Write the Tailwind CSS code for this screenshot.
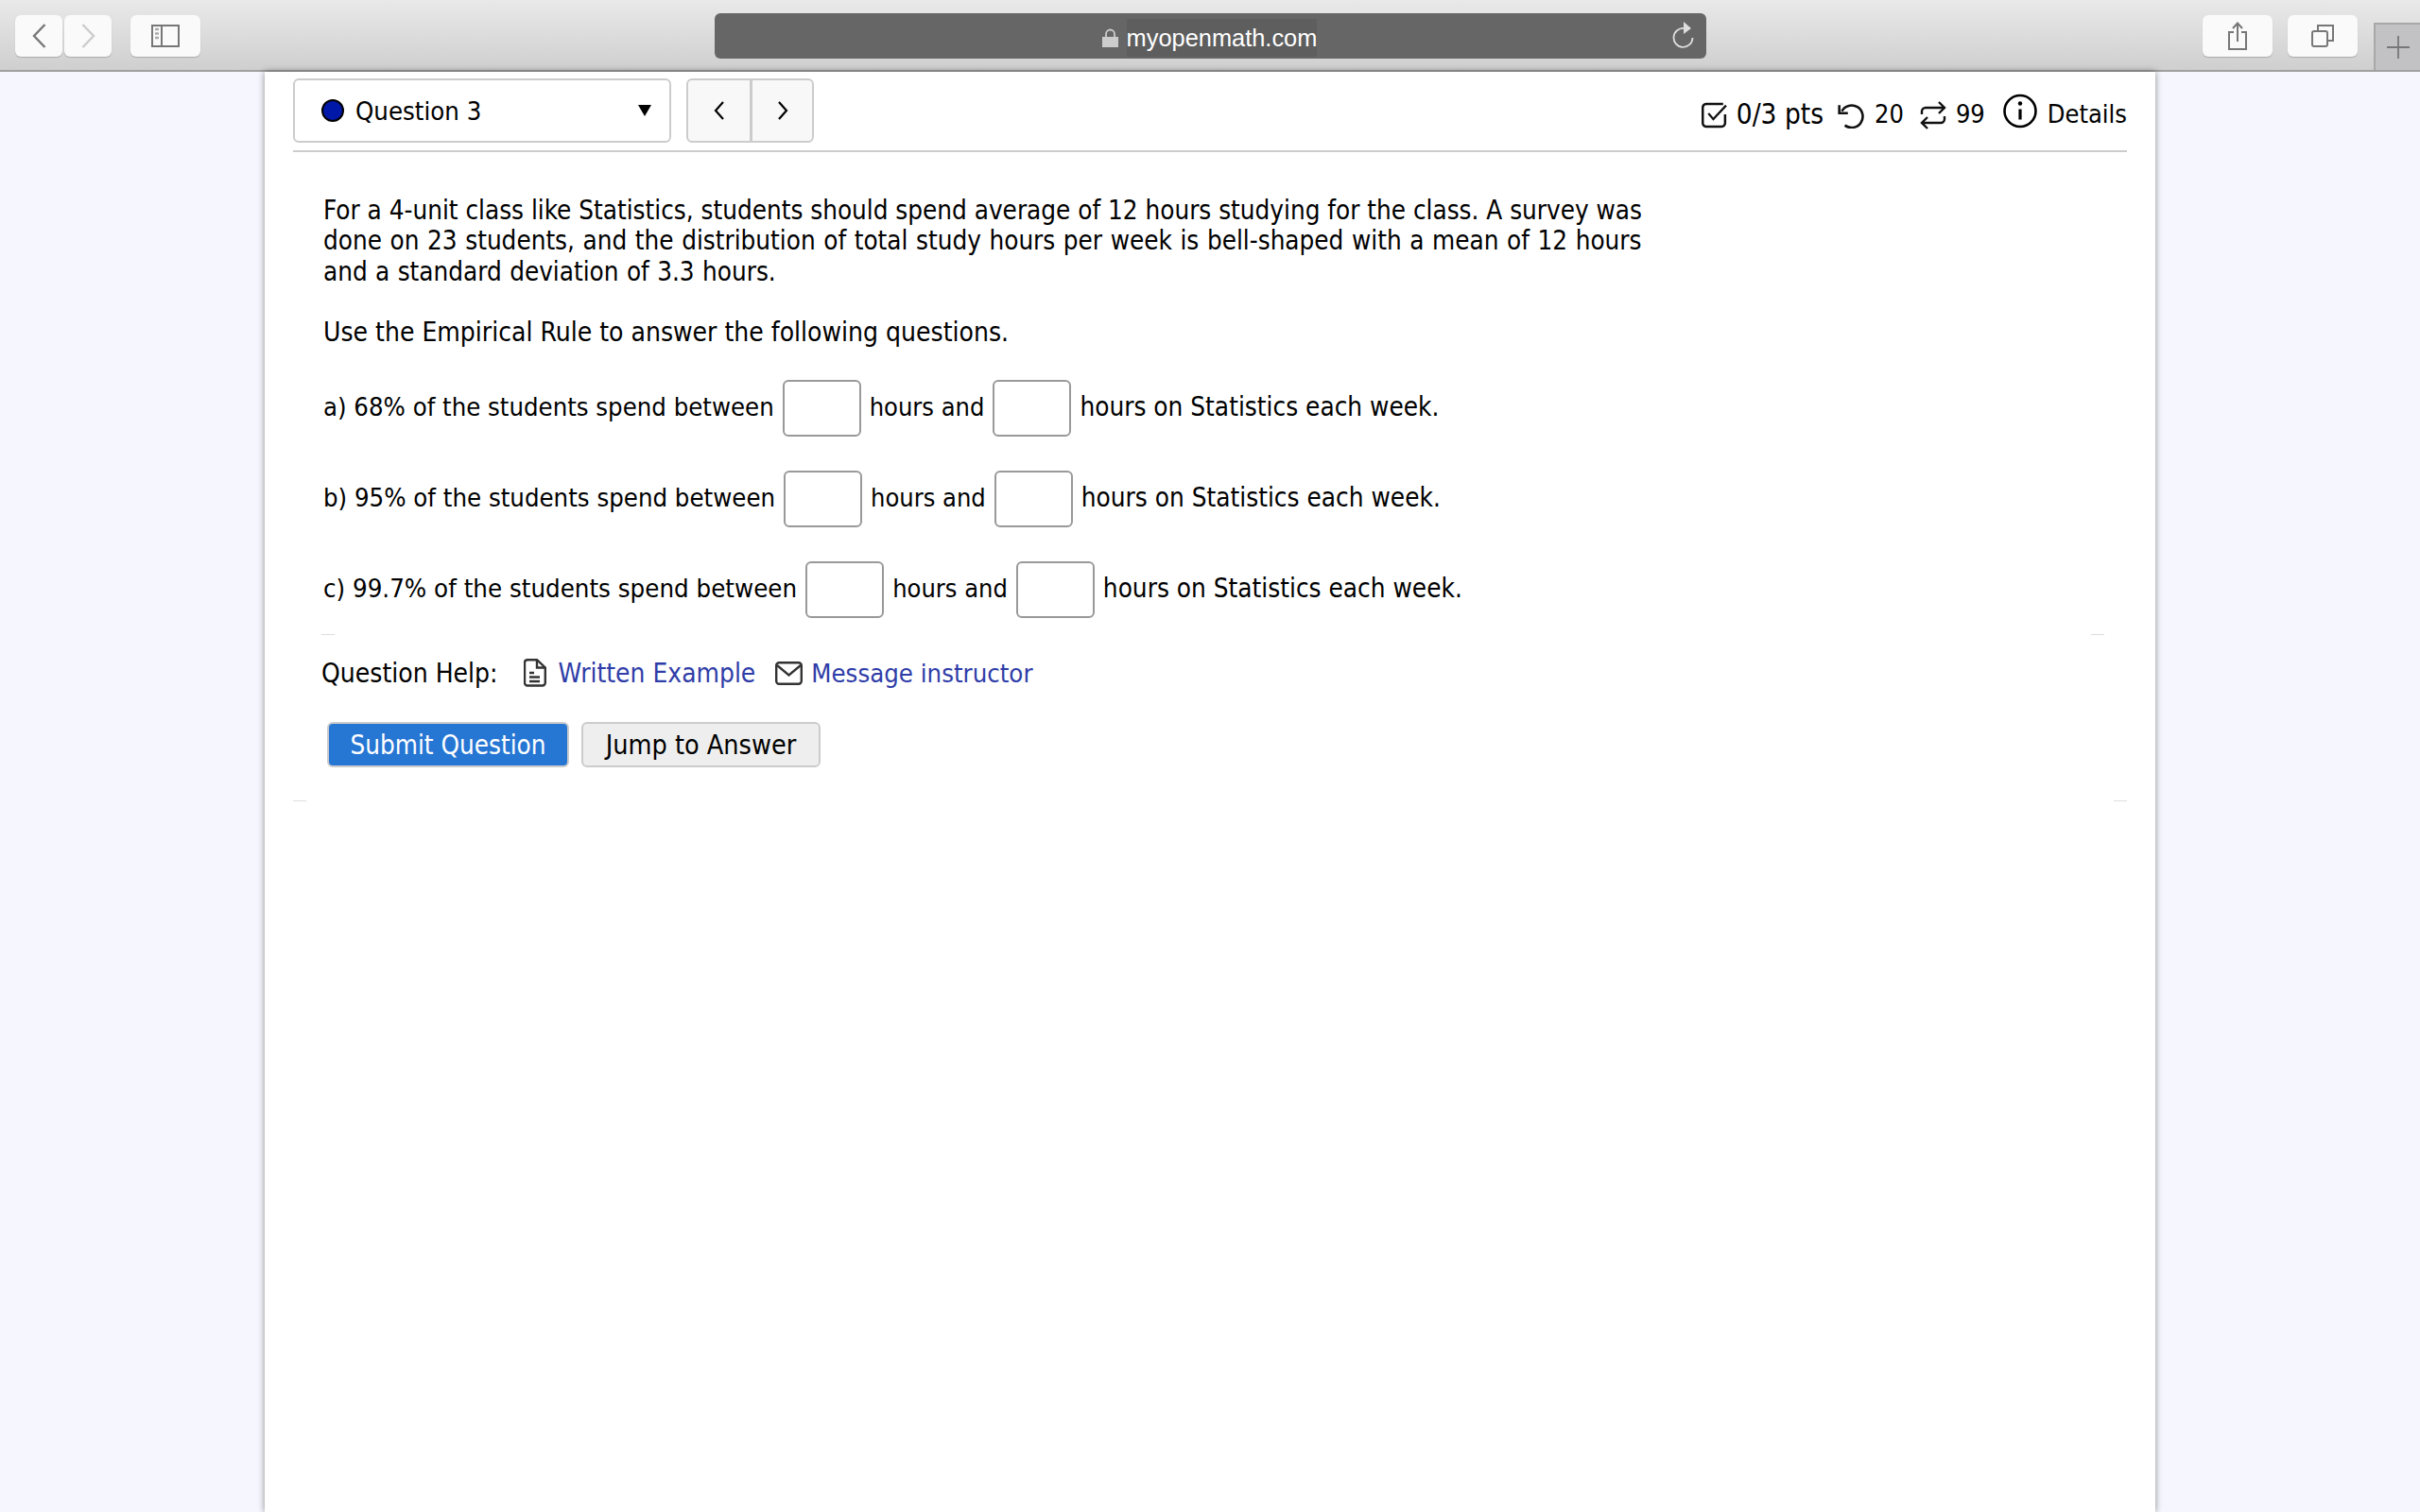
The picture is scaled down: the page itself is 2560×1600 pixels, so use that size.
<!DOCTYPE html>
<html lang="en">
<head>
  <meta charset="UTF-8">
  <title>myopenmath.com</title>
  <script src="https://cdn.jsdelivr.net/npm/@tailwindcss/browser@4"></script>
</head>
<body class="bg-[#f6f7fe] text-black h-[1600px] overflow-hidden font-['DejaVu_Sans'] [font-stretch:condensed] text-[27.6px]">

  <!-- Browser toolbar -->
  <header class="h-[76px] bg-gradient-to-b from-[#e9e9e9] to-[#cfcfcf] border-b-2 border-[#a0a0a0] flex items-start pl-[16px]">
    <div class="w-[50px] h-[44px] mt-[16px] bg-[#fafafa] rounded-[6px] shadow-[0_1px_1px_#aaa] flex items-center justify-center">
      <svg width="15" height="26" viewBox="0 0 15 26" fill="none" stroke="#777" stroke-width="2.4"><path d="M13.5 1 2 13l11.500 12"/></svg>
    </div>
    <div class="w-[50px] h-[44px] mt-[16px] ml-[2px] bg-[#fafafa] rounded-[6px] shadow-[0_1px_1px_#aaa] flex items-center justify-center">
      <svg width="15" height="26" viewBox="0 0 15 26" fill="none" stroke="#ccc" stroke-width="2.4"><path d="M1.500 1 13 13 1.500 25"/></svg>
    </div>
    <div class="w-[74px] h-[44px] mt-[16px] ml-[20px] bg-[#fafafa] rounded-[6px] shadow-[0_1px_1px_#aaa] flex items-center justify-center">
      <svg width="30" height="24" viewBox="0 0 30 24" fill="none" stroke="#777" stroke-width="2"><rect x="1" y="1" width="28" height="22"/><path d="M11 1v22"/><path d="M4 5h4M4 9.500h4M4 14h4" stroke="#aaa" stroke-width="2.400"/></svg>
    </div>

    <div class="relative w-[1049px] h-[48px] mt-[14px] ml-[544px] rounded-[6px] bg-[#666666] flex items-center justify-center">
      <svg width="17" height="20" viewBox="0 0 17 20" class="mt-[4px] mr-[9px] -ml-[2px]"><path d="M4 9V6a4.500 4.500 0 0 1 9 0v3" fill="none" stroke="#ccc" stroke-width="1.800"/><rect x="0" y="9" width="17" height="11" fill="#ccc"/></svg>
      <span class="mt-[4px] text-white text-[25.400px] font-['Liberation_Sans'] [font-stretch:normal] bg-[#5e5e5e] leading-[40px]">myopenmath.com</span>
      <svg width="24" height="28" viewBox="0 0 24 28" fill="none" class="absolute right-[13px] top-[9px]"><path d="M14 7A10 10 0 1 0 22.500 17" stroke="#ddd" stroke-width="1.800"/><path d="M13 0l8 7-8 6z" fill="#ddd"/></svg>
    </div>

    <div class="w-[74px] h-[44px] mt-[16px] ml-[525px] bg-[#fafafa] rounded-[6px] shadow-[0_1px_1px_#aaa] flex items-center justify-center">
      <svg width="20" height="30" viewBox="0 0 20 30" fill="none" stroke="#777" stroke-width="2"><path d="M6 11H1v18h18V11h-5"/><path d="M10 21V1.500M5 7l5-5.500L15 7"/></svg>
    </div>
    <div class="w-[74px] h-[44px] mt-[16px] ml-[16px] bg-[#fafafa] rounded-[6px] shadow-[0_1px_1px_#aaa] flex items-center justify-center">
      <svg width="24" height="24" viewBox="0 0 24 24" fill="none" stroke="#777" stroke-width="2"><rect x="1" y="7" width="16" height="16" rx="2"/><path d="M7 6V1h16v16h-5"/></svg>
    </div>
    <div class="w-[49px] h-[50px] mt-[24px] ml-[17px] bg-[#c2c2c4] border-t-2 border-l-2 border-[#a8a8a8] flex items-center justify-center">
      <svg width="24" height="24" viewBox="0 0 24 24" stroke="#777" stroke-width="1.800"><path d="M12 0v24M0 12h24"/></svg>
    </div>
  </header>

  <!-- Page -->
  <main class="w-[2000px] ml-[280px] h-[1524px] bg-white shadow-[0_0_7px_rgba(0,0,0,0.45)] px-[30px]">

    <div class="h-[85px] border-b-2 border-[#cccccc] flex items-start justify-between">
      <div class="flex items-center mt-[7px]">
        <div class="w-[400px] h-[68px] border-2 border-[#cccccc] rounded-[6px] flex items-center pl-[28px] pr-[19px]">
          <span class="w-[24px] h-[24px] rounded-full bg-[#0018a8] border-2 border-black"></span>
          <span class="ml-[12px] pt-[2px] flex-1 text-[27.300px]">Question 3</span>
          <span class="w-0 h-0 border-l-[7px] border-r-[7px] border-t-[12px] border-l-transparent border-r-transparent border-t-black"></span>
        </div>
        <div class="ml-[16px] h-[68px] flex border-2 border-[#cccccc] rounded-[6px] bg-[#f8f8f8]">
          <div class="w-[68px] border-r-[3px] border-[#cccccc] flex items-center justify-center">
            <svg width="12" height="20" viewBox="0 0 12 20" fill="none" stroke="#000" stroke-width="2.200"><path d="M10 1 2 10l8 9"/></svg>
          </div>
          <div class="w-[63px] flex items-center justify-center">
            <svg width="12" height="20" viewBox="0 0 12 20" fill="none" stroke="#000" stroke-width="2.200"><path d="m2 1 8 9-8 9"/></svg>
          </div>
        </div>
      </div>
      <div class="flex items-center mt-[26px] h-[36px] text-[27px]">
        <svg width="28" height="28" viewBox="0 0 27 26" fill="none" stroke="#111" stroke-width="2.400" class="mt-[4px]"><path d="M24 12v9a3.500 3.500 0 0 1-3.500 3.500h-16A3.500 3.500 0 0 1 1.200 21V5a3.500 3.500 0 0 1 3.300-3.500H22"/><path d="m7 11 5 6L25 3" stroke-width="2.200"/></svg>
        <span class="ml-[9px] mt-[2px] text-[29.500px]">0/3 pts</span>
        <svg width="30" height="26" viewBox="0 0 28 24" fill="none" stroke="#111" stroke-width="2.400" class="ml-[14px] mt-[5px]"><path d="M5 7a11 11 0 1 1 3 14"/><path d="M2.500 1v8h8.500"/></svg>
        <span class="ml-[10px] mt-[2px]">20</span>
        <svg width="28" height="30" viewBox="0 0 28 30" fill="none" stroke="#111" stroke-width="2.400" class="ml-[17px] mt-[4px]"><path d="M2 14v-3a4 4 0 0 1 4-4h20M20 1l6 6-6 6"/><path d="M26 16v3a4 4 0 0 1-4 4H2M8 17l-6 6 6 6"/></svg>
        <span class="ml-[10px] mt-[2px]">99</span>
        <svg width="36" height="37" viewBox="0 0 36 37" fill="none" stroke="#000" stroke-width="2.600" class="ml-[19px] -mt-[5px]"><circle cx="18" cy="18.500" r="16.500"/><path d="M18 16.500v11" stroke-width="3.200"/><circle cx="18" cy="10.500" r="2.200" fill="#000" stroke="none"/></svg>
        <span class="ml-[11px] mt-[2px]">Details</span>
      </div>
    </div>

    <!-- Question text -->
    <div class="pl-[32px] pt-[46px] leading-[32.300px]">
      <p class="whitespace-nowrap">For a 4-unit class like Statistics, students should spend average of 12 hours studying for the class. A survey was<br><span class="[word-spacing:0.7px]">done on 23 students, and the distribution of total study hours per week is bell-shaped with a mean of 12 hours</span><br><span class="[word-spacing:0.5px]">and a standard deviation of 3.3 hours.</span></p>
      <p class="mt-[32px] text-[28px]">Use the Empirical Rule to answer the following questions.</p>

      <div class="mt-[34px] flex items-center h-[60px]">
        <span class="mb-[3px] text-[27.250px]">a) 68% of the students spend between</span>
        <input class="w-[83px] h-[60px] mx-[9px] border-2 border-[#999999] rounded-[6px]" type="text">
        <span class="mb-[3px] text-[27px]">hours and</span>
        <input class="w-[83px] h-[60px] mx-[9px] border-2 border-[#999999] rounded-[6px]" type="text">
        <span class="mb-[3px] text-[27.700px]">hours on Statistics each week.</span>
      </div>
      <div class="mt-[36px] flex items-center h-[60px]">
        <span class="mb-[3px] text-[27.300px]">b) 95% of the students spend between</span>
        <input class="w-[83px] h-[60px] mx-[9px] border-2 border-[#999999] rounded-[6px]" type="text">
        <span class="mb-[3px] text-[27px]">hours and</span>
        <input class="w-[83px] h-[60px] mx-[9px] border-2 border-[#999999] rounded-[6px]" type="text">
        <span class="mb-[3px] text-[27.700px]">hours on Statistics each week.</span>
      </div>
      <div class="mt-[36px] flex items-center h-[60px]">
        <span class="mb-[3px] text-[27.400px]">c) 99.7% of the students spend between</span>
        <input class="w-[83px] h-[60px] mx-[9px] border-2 border-[#999999] rounded-[6px]" type="text">
        <span class="mb-[3px] text-[27px]">hours and</span>
        <input class="w-[83px] h-[60px] mx-[9px] border-2 border-[#999999] rounded-[6px]" type="text">
        <span class="mb-[3px] text-[27.700px]">hours on Statistics each week.</span>
      </div>
    </div>

    <div class="ml-[30px] mr-[24px] mt-[17px] flex justify-between">
      <div class="w-[14px] h-[1px] bg-[#dddddd]"></div>
      <div class="w-[14px] h-[1px] bg-[#dddddd]"></div>
    </div>

    <div class="ml-[30px] mt-[22px] flex items-center h-[36px]">
      <span class="pt-[2px] text-[28px]">Question Help:</span>
      <svg width="24" height="30" viewBox="0 0 24 30" fill="none" stroke="#333" stroke-width="2.400" class="ml-[27px]"><path d="M4 1.200h10l8.800 8.300V25.500a3 3 0 0 1-3 3H4a3 3 0 0 1-3-3V4a3 3 0 0 1 3-2.800z"/><path d="M14 1v8.500h8.500M6 15h5M6 19.500h11M6 24h11"/></svg>
      <a class="ml-[13px] pt-[2px] text-[#2f3da8] text-[27.900px]">Written Example</a>
      <svg width="29" height="25" viewBox="0 0 29 25" fill="none" stroke="#333" stroke-width="2.400" class="ml-[21px]"><rect x="1.200" y="1.200" width="26.600" height="22.600" rx="3"/><path d="m2 4 12.500 10.500L27 4"/></svg>
      <a class="ml-[9px] pt-[2px] text-[#2f3da8] text-[27.300px]">Message instructor</a>
    </div>

    <div class="ml-[36px] mt-[34px] flex gap-[13px]">
      <button class="w-[256px] h-[48px] pt-[2px] rounded-[6px] border-2 border-[#cccccc] bg-[#2676d4] text-white">Submit Question</button>
      <button class="w-[253px] h-[48px] pt-[2px] rounded-[6px] border-2 border-[#cccccc] bg-[#eeeeee] text-black text-[28.500px]">Jump to Answer</button>
    </div>

    <div class="mt-[35px] flex justify-between">
      <div class="w-[14px] h-[1px] bg-[#dddddd]"></div>
      <div class="w-[14px] h-[1px] bg-[#dddddd]"></div>
    </div>
  </main>

</body>
</html>
